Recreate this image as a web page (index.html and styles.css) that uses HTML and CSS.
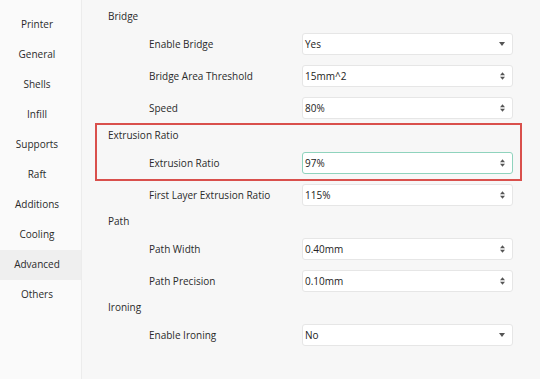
FILE: index.html
```html
<!DOCTYPE html>
<html lang="en">
<head>
    <meta charset="UTF-8">
    <title>Advanced Settings</title>
    <link rel="stylesheet" href="styles.css">
</head>
<body>
    <div class="settings">
        <!-- Category list -->
        <ul class="sidebar">
            <li>Printer</li>
            <li>General</li>
            <li>Shells</li>
            <li>Infill</li>
            <li>Supports</li>
            <li>Raft</li>
            <li>Additions</li>
            <li>Cooling</li>
            <li class="active">Advanced</li>
            <li>Others</li>
        </ul>

        <div class="panel">
            <div class="group">
                <div class="group-title">Bridge</div>
                <div class="row">
                    <span class="label">Enable Bridge</span>
                    <div class="field">Yes <svg class="caret" viewBox="0 0 6 4"><path d="M0 0H6L3 4Z"/></svg></div>
                </div>
                <div class="row">
                    <span class="label">Bridge Area Threshold</span>
                    <div class="field">15mm^2 <svg class="spin" viewBox="0 0 6 9"><path d="M0 3.5H6L3 0Z M0 5.5H6L3 9Z"/></svg></div>
                </div>
                <div class="row">
                    <span class="label">Speed</span>
                    <div class="field">80% <svg class="spin" viewBox="0 0 6 9"><path d="M0 3.5H6L3 0Z M0 5.5H6L3 9Z"/></svg></div>
                </div>
            </div>

            <!-- Highlighted group -->
            <div class="group highlight">
                <div class="group-title">Extrusion Ratio</div>
                <div class="row">
                    <span class="label">Extrusion Ratio</span>
                    <div class="field focused">97% <svg class="spin" viewBox="0 0 6 9"><path d="M0 3.5H6L3 0Z M0 5.5H6L3 9Z"/></svg></div>
                </div>
            </div>

            <div class="group">
                <div class="row">
                    <span class="label">First Layer Extrusion Ratio</span>
                    <div class="field">115% <svg class="spin" viewBox="0 0 6 9"><path d="M0 3.5H6L3 0Z M0 5.5H6L3 9Z"/></svg></div>
                </div>
            </div>

            <div class="group">
                <div class="group-title">Path</div>
                <div class="row">
                    <span class="label">Path Width</span>
                    <div class="field">0.40mm <svg class="spin" viewBox="0 0 6 9"><path d="M0 3.5H6L3 0Z M0 5.5H6L3 9Z"/></svg></div>
                </div>
                <div class="row">
                    <span class="label">Path Precision</span>
                    <div class="field">0.10mm <svg class="spin" viewBox="0 0 6 9"><path d="M0 3.5H6L3 0Z M0 5.5H6L3 9Z"/></svg></div>
                </div>
            </div>

            <div class="group">
                <div class="group-title">Ironing</div>
                <div class="row">
                    <span class="label">Enable Ironing</span>
                    <div class="field">No <svg class="caret" viewBox="0 0 6 4"><path d="M0 0H6L3 4Z"/></svg></div>
                </div>
            </div>
        </div>
    </div>
</body>
</html>
```

FILE: styles.css
```css
/* Basic layout */
body {
    margin: 0;
    font-family: 'Open Sans', sans-serif;
    font-size: 10px;
    color: #2a2a2a;
    background: #f7f7f7;
}

.settings {
    display: flex;
    height: 379px;
}

/* Category list */
.sidebar {
    list-style: none;
    margin: 0;
    padding: 10px 0 0;
    width: 81px;
    background: #fafafa;
    border-right: 1px solid #ececec;
}

.sidebar li {
    height: 30px;
    line-height: 29px;
    text-align: center;
    padding-right: 7px;
}

.sidebar li.active {
    background: #efefef;
}

/* Settings panel */
.panel {
    flex: 1;
    padding: 6px 18px 0 13px;
}

.group-title {
    height: 22px;
    line-height: 21px;
    padding-left: 13px;
}

.row {
    display: grid;
    grid-template-columns: 1fr 211px;
    align-items: center;
    height: 32px;
    padding: 0 9px 0 54px;
}

.label {
    margin-top: -1px;
}

.field {
    display: flex;
    align-items: center;
    justify-content: space-between;
    box-sizing: border-box;
    height: 22px;
    padding: 0 7px 0 2px;
    background: #fff;
    border: 1px solid #e6e6e6;
    border-radius: 3px;
    color: #222;
}

.field.focused {
    border-color: #8fd3bd;
}

.caret { width: 6px; height: 4px; fill: #555; }
.spin { width: 5px; height: 8px; fill: #555; }

/* Red outline around the selected group */
.highlight {
    border: 2px solid #d9504c;
    margin: -1px 0 -2px;
}

.highlight .group-title { padding-left: 11px; }
.highlight .row { padding: 0 7px 0 52px; }
```
